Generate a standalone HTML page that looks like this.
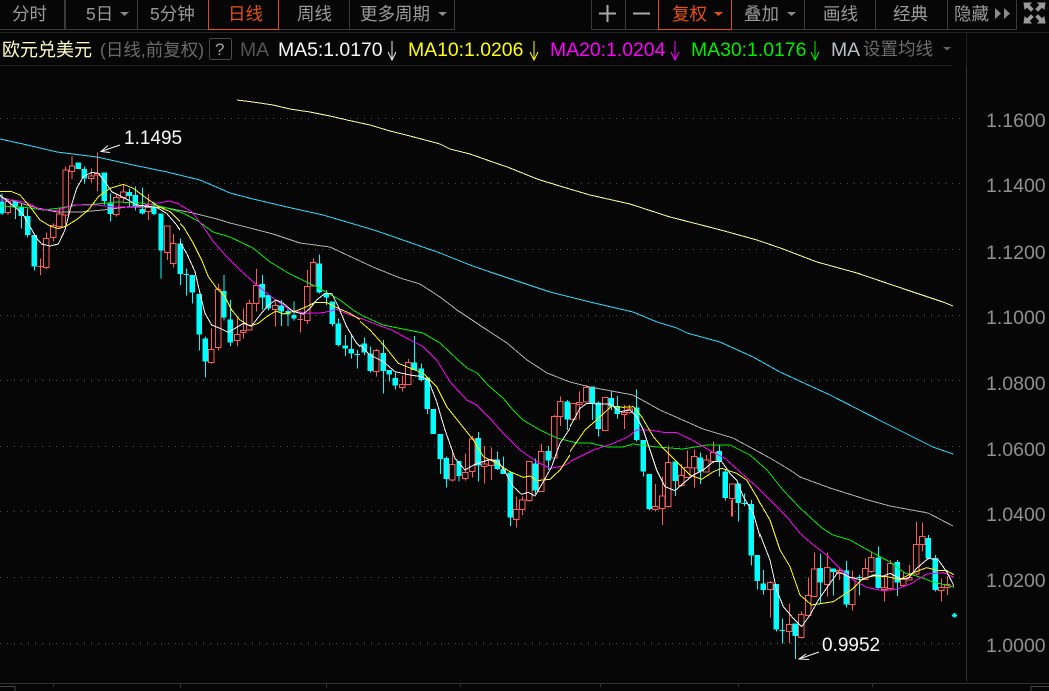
<!DOCTYPE html>
<html><head><meta charset="utf-8"><style>
html,body{margin:0;padding:0;background:#060606;width:1049px;height:691px;overflow:hidden}
svg{display:block}
text{font-family:"Liberation Sans","Noto Sans CJK SC",sans-serif}
.c{fill:none;stroke:#00ffff}
.r{fill:none;stroke:#ff5a5a}
.rb{fill:#060606;stroke:#ff5a5a;stroke-width:3}
.l polyline{fill:none;stroke-width:3;stroke-linejoin:round;shape-rendering:crispEdges}
.w{stroke:#f8f8f8}.y{stroke:#ffff00}.m{stroke:#ff00ff}.g{stroke:#00ee00}
.t{font-size:17.5px;fill:#9a9a9a}
.a{font-size:19.5px;fill:#909090}
.h{font-size:19.4px}
</style></head><body>
<svg width="1049" height="691" viewBox="0 0 1049 691" xmlns="http://www.w3.org/2000/svg">
<defs>
<clipPath id="k3"><rect x="0" y="0" width="180" height="691"/></clipPath>
<clipPath id="k4"><rect x="180" y="0" width="180" height="691"/></clipPath>
<clipPath id="k5"><rect x="360" y="0" width="210" height="691"/></clipPath>
<clipPath id="k6"><rect x="570" y="0" width="190" height="691"/></clipPath>
<clipPath id="k7"><rect x="760" y="0" width="194" height="691"/></clipPath>
</defs>
<rect width="1049" height="691" fill="#060606"/>

<!-- toolbar -->
<g stroke="#3a3a3a" fill="none" shape-rendering="crispEdges">
<path d="M0 29.5H454.5V0M64.5 0V29M65.5 0V29M137.5 0V29M349.5 0V29"/>
<path d="M591.5 0V29.5H1016.5V0M625.5 0V29M804.5 0V29M875.5 0V29M947.5 0V29"/>
<path stroke="#222" d="M0 32.5H1049M0 65.5H952M966.5 33V65"/>
</g>
<path d="M208.5 0V29.5H278.5V0M658.5 0V29.5H731.5V0" fill="none" stroke="#e0500e" shape-rendering="crispEdges"/>
<text class="t" x="12" y="20">分时</text>
<text class="t" x="86" y="20">5日</text>
<path d="M120 12h9l-4.500 4z" fill="#8a8a8a"/>
<text class="t" x="150" y="20">5分钟</text>
<text class="t" x="228" y="20" style="fill:#e8500f">日线</text>
<text class="t" x="297" y="20">周线</text>
<text class="t" x="360" y="20">更多周期</text>
<path d="M438 12h9l-4.500 4z" fill="#8a8a8a"/>
<path d="M599 13.500H616M607.500 5V22M633 13.500H650" stroke="#aaa" stroke-width="2" fill="none"/>
<text class="t" x="672" y="20" style="fill:#e8500f">复权</text>
<path d="M714 12h9l-4.500 4z" fill="#e8500f"/>
<text class="t" x="744" y="20">叠加</text>
<path d="M787 12h9l-4.500 4z" fill="#8a8a8a"/>
<text class="t" x="823" y="20">画线</text>
<text class="t" x="893" y="20">经典</text>
<text class="t" x="954" y="20">隐藏</text>
<path d="M995 8l6 5.500-6 5.500zM1004 8l6 5.500-6 5.500z" fill="#8a8a8a"/>
<g fill="#9a9a9a" stroke="#9a9a9a" stroke-width="1">
<path d="M1024 3h7l-2 2 4 4-2 2-4-4-2 2zM1045 3h-7l2 2-4 4 2 2 4-4 2 2zM1024 23h7l-2-2 4-4-2-2-4 4-2-2zM1045 23h-7l2-2-4-4 2-2 4 4 2-2z"/>
</g>

<!-- header row -->
<text x="2" y="56" font-size="18" fill="#ffffc8">欧元兑美元</text>
<text x="100" y="56" font-size="17.500" fill="#6a6a6a">(日线,前复权)</text>
<rect x="209.500" y="38.500" width="22" height="21" rx="2" fill="none" stroke="#4a4a4a"/>
<text x="215" y="55" font-size="17" fill="#a0a0a0">?</text>
<text class="h" x="240" y="56" fill="#555">MA</text>
<text class="h" x="278" y="56" fill="#f8f8f8">MA5:1.0170</text>
<path d="M392 41V60M388 52L392 60L396 52" stroke="#eee" fill="none"/>
<text class="h" x="408" y="56" fill="#ffff00">MA10:1.0206</text>
<path d="M534 41V60M530 52L534 60L538 52" stroke="#ffff00" fill="none"/>
<text class="h" x="550" y="56" fill="#ff00ff">MA20:1.0204</text>
<path d="M675 41V60M671 52L675 60L679 52" stroke="#ff00ff" fill="none"/>
<text class="h" x="691" y="56" fill="#00ee00">MA30:1.0176</text>
<path d="M815 41V60M811 52L815 60L819 52" stroke="#00ee00" fill="none"/>
<text class="h" x="831" y="56" fill="#b8c0c8">MA</text>
<text x="863" y="55" font-size="17.500" fill="#6c6c6c">设置均线</text>
<path d="M943 47h8l-4 3.500z" fill="#666"/>

<!-- grid -->
<g stroke="#4a4a4a" stroke-dasharray="1 6" shape-rendering="crispEdges">
<path d="M0 118.500H970M0 183.500H970M0 249.500H970M0 315.500H970M0 380.500H970M0 446.500H970M0 511.500H970M0 577.500H970M0 643.500H970"/>
</g>
<path d="M966.500 66V681M0 683.500H1049M53.500 684V687M180.500 683V688M326.500 683V688M460.500 684V687M600.500 684V687M738.500 684V687M872.500 684V687" stroke="#333" fill="none" shape-rendering="crispEdges"/>
<path d="M0 686.500H15V691M1031 691V686.500H1049" stroke="#444" fill="none" shape-rendering="crispEdges"/>

<!-- axis labels -->
<text class="a" x="986" y="127">1.1600</text>
<text class="a" x="986" y="192">1.1400</text>
<text class="a" x="986" y="259">1.1200</text>
<text class="a" x="986" y="324">1.1000</text>
<text class="a" x="986" y="390">1.0800</text>
<text class="a" x="986" y="456">1.0600</text>
<text class="a" x="986" y="521">1.0400</text>
<text class="a" x="986" y="587">1.0200</text>
<text class="a" x="986" y="652">1.0000</text>

<!-- candles -->
<g shape-rendering="crispEdges">
<g transform="translate(0 120) scale(.33333)">
<path class="c" stroke-width="3" d="M6 220V285M46 240V297M64 250V325M83 265V352M103 345V452M235 128V147M253 140V190M313 158V255M331 220V305M388 205V260M406 200V272M427 202V283"/>
<path class="c" stroke-width="16" d="M6 245V280M46 245V262M64 262V288M83 288V345M103 345V440M235 128V147M253 147V175M313 158V243M331 250V282M388 216V228M406 225V258M427 267V280"/>
<path class="r" stroke-width="3" d="M24 235V285M121 415V465M139 338V447M160 310V365M178 262V325M197 140V315M216 108V177M274 145V188M292 97V213M349 222V290M370 195V245M445 222V300M113 439H129"/>
<path class="rb" d="M16 245H32V278H16ZM131 355H147V443H131ZM152 316H168V352H152ZM170 282H186V320H170ZM189 150H205V285H189ZM208 138H224V155H208ZM266 168H282V176H266ZM284 160H300V165H284ZM341 232H357V284H341ZM362 216H378V232H362ZM437 262H453V275H437Z"/>
</g>
<g transform="translate(150 200) scale(.33333)">
<path class="c" stroke-width="3" d="M12 5V47M33 40V236M91 115V255M109 205V287M127 225V310M148 282V452M166 410V533M222 225V362M241 300V438M337 225V328M355 282V332M394 300V378M414 325V378M432 305V362M508 163V280M529 270V315M547 305V380M565 355V440M586 405V468M604 405V475M622 450V505M643 412V465M661 440V518M700 420V580M718 510V545M736 518V568M793 408V510M814 490V545M101 223H117M614 463H630"/>
<path class="c" stroke-width="16" d="M12 20V42M33 40V152M91 130V222M127 225V278M148 282V404M166 415V485M222 273V353M241 358V428M337 252V293M355 285V325M394 316V335M414 333V344M432 345V356M508 190V278M529 280V293M547 305V372M565 370V435M586 436V446M604 447V461M643 430V458M661 460V513M700 459V513M718 510V524M736 534V557M793 487V510M814 505V540"/>
<path class="r" stroke-width="3" d="M52 78V180M70 102V203M184 385V490M205 250V452M262 350V440M280 325V415M298 298V392M319 207V335M376 305V380M451 335V398M472 210V372M490 175V258M679 447V530M757 527V575M775 477V555M443 358H459"/>
<path class="rb" d="M44 78H60V158H44ZM62 130H78V190H62ZM176 448H192V488H176ZM197 268H213V443H197ZM254 403H270V422H254ZM272 392H288V397H272ZM290 310H306V390H290ZM311 256H327V310H311ZM368 317H384V329H368ZM464 259H480V362H464ZM482 187H498V258H482ZM671 451H687V515H671ZM749 553H765V562H749ZM767 487H783V553H767Z"/>
</g>
<g transform="translate(330 330) scale(.33333)">
<path class="c" stroke-width="3" d="M292 143V252M310 237V312M331 312V432M349 380V473M387 393V455M445 306V455M502 365V420M520 380V432M541 425V588M616 385V492M655 348V420M712 210V300M787 170V270M805 215V320M844 185V240M862 198V265"/>
<path class="c" stroke-width="16" d="M292 143V237M310 237V312M331 312V387M349 384V447M387 393V438M445 324V407M502 388V417M520 417V432M541 428V563M616 400V482M655 363V392M712 214V269M787 170V220M805 217V297M844 204V230M862 228V252"/>
<path class="r" stroke-width="3" d="M367 360V455M406 370V452M427 318V442M463 348V460M484 353V450M559 500V593M577 500V555M598 394V515M634 342V485M673 255V385M691 200V288M730 220V270M748 185V268M769 165V218M826 202V302M883 225V297M899 225V250"/>
<path class="rb" d="M359 403H375V450H359ZM398 427H414V446H398ZM419 327H435V425H419ZM455 402H471V410H455ZM476 390H492V407H476ZM551 538H567V568H551ZM569 510H585V538H569ZM590 394H606V512H590ZM626 364H642V485H626ZM665 259H681V384H665ZM683 214H699V260H683ZM722 220H738V268H722ZM740 217H756V224H740ZM761 172H777V216H761ZM818 202H834V302H818ZM875 247H891V254H875ZM891 237H907V247H891Z"/>
</g>
<g transform="translate(540 380) scale(.33333)">
<path class="c" stroke-width="3" d="M290 28V185M310 180V290M328 282V392M406 245V348M481 218V312M538 197V290M556 270V362M595 311V425M613 340V378M605 370H621"/>
<path class="c" stroke-width="16" d="M290 82V180M310 180V275M328 282V387M406 245V303M481 232V275M538 213V243M556 275V354M595 311V369"/>
<path class="r" stroke-width="3" d="M346 312V395M367 290V435M385 197V382M424 252V320M442 212V294M463 208V323M499 225V278M520 184V250M577 312V410"/>
<path class="rb" d="M338 379H354V388H338ZM359 348H375V386H359ZM377 247H393V380H377ZM416 286H432V316H416ZM434 262H450V292H434ZM455 229H471V264H455ZM491 240H507V276H491ZM512 218H528V245H512ZM569 312H585V356H569Z"/>
</g>
<g transform="translate(730 500) scale(.33333)">
<path class="c" stroke-width="3" d="M64 0V197M82 165V268M100 210V283M139 252V395M157 355V430M196 370V477M271 160V310M310 205V287M349 183V322M388 225V287M445 140V266M502 180V288M595 105V178M616 165V275M149 392H165M380 233H396M35 10H51M43 0V18"/>
<path class="c" stroke-width="16" d="M64 12V167M82 165V243M100 250V270M139 252V388M196 370V408M271 204V248M310 205V216M349 212V313M445 172V264M502 186V248M595 114V175M616 174V270"/>
<path class="c" stroke-width="6" d="M666 346H681M673 339V353"/>
<path class="r" stroke-width="3" d="M5 0V50M121 243V353M178 310V430M214 335V415M235 232V348M253 158V290M292 157V290M328 205V240M367 212V332M406 176V240M424 155V218M463 230V305M481 180V268M520 215V258M538 195V240M559 66V225M577 68V155M634 235V305M652 228V285"/>
<path class="rb" d="M113 247H129V268H113ZM170 373H186V395H170ZM206 343H222V413H206ZM227 286H243V346H227ZM245 207H261V290H245ZM284 202H300V254H284ZM320 212H336V220H320ZM359 233H375V314H359ZM398 205H414V238H398ZM416 172H432V215H416ZM455 262H471V268H455ZM473 191H489V266H473ZM512 238H528V256H512ZM530 232H546V240H530ZM551 133H567V222H551ZM569 109H585V133H569ZM626 262H642V272H626ZM644 253H660V262H644Z"/>
</g>
</g>

<!-- long MAs and gray / green in page coordinates -->
<g class="l">
<polyline stroke="#ffff99" stroke-width="1" style="stroke-width:1" points="237,100 253,102 273,105 290,109 310,112 330,116 347,120 370,125 390,131 410,136 440,144 450,149 470,154 487,160 510,168 537,179 563,187 590,195 630,204 670,217 717,229 757,240 783,249 817,262 857,273 907,290 943,302 953,306"/>
<polyline stroke="#22ddff" style="stroke-width:1" points="0,139 23,144 57,152 97,157 133,165 167,172 200,180 230,193 253,199 287,207 323,215 357,225 377,231 420,246 440,253 470,265 490,272 523,283 550,292 590,302 633,312 657,322 677,328 687,333 720,342 753,357 780,372 830,395 883,422 933,447 953,454"/>
<polyline stroke="#b0b0b0" style="stroke-width:1" points="0,197 20,203 37,208 57,212 80,212 103,210 127,207 153,207 167,208 193,213 217,219 230,223 250,228 273,234 300,243 330,247 347,255 373,267 400,278 420,284 440,297 457,310 487,330 507,343 527,360 547,373 570,382 590,387 633,395 660,410 703,429 733,438 770,458 790,470 800,477 830,488 868,500 890,506 928,513 953,526"/>
<polyline class="g" style="stroke-width:1" points="0,206 23,207 43,210 60,208 77,205 97,204 117,202 140,203 160,206 183,213 198,221 213,232 230,237 253,248 270,262 290,274 317,287 340,300 353,310 363,316 383,325 403,329 423,333 440,343 458,360 467,368 477,373 490,387 503,398 513,410 523,420 540,430 557,438 577,443 590,443 607,447 623,447 633,444 657,447 683,449 707,445 730,445 750,455 767,470 783,490 800,508 822,528 833,535 850,540 873,553 890,562 905,573 920,577 933,582 954,587"/>
</g>

<!-- moving averages -->
<g class="l">
<g clip-path="url(#k3)"><g transform="translate(0 120) scale(.33333)">
<polyline class="m" points="0,240 40,240 80,248 120,268 170,272 220,255 290,255 350,262 420,258 470,250 510,243 555,258 590,295 630,360 680,420 730,465 780,490"/>
<polyline class="y" points="0,215 35,215 60,225 90,260 120,300 150,318 175,326 200,318 235,295 265,270 295,230 330,205 370,193 400,205 440,235 475,260 510,275 545,310 575,360 605,420 630,480 660,520"/>
<polyline class="w" points="0,225 30,250 50,265 70,285 90,320 110,355 125,372 150,378 175,372 195,330 210,270 230,205 250,170 275,157 295,160 315,185 335,215 365,230 385,240 410,255 440,258 470,262 500,280 530,315 560,360 580,420 600,490 605,520"/>
</g></g>
<g clip-path="url(#k4)"><g transform="translate(150 200) scale(.33333)">
<polyline class="m" points="0,15 40,5 85,12 125,35 160,80 190,125 230,170 270,210 320,255 370,295 420,330 470,340 520,338 560,328 600,345 660,365 720,385 770,408 810,425 840,450 870,505 900,545"/>
<polyline class="y" points="0,5 30,25 70,50 100,80 130,130 155,180 175,230 200,265 225,290 245,330 270,360 300,378 325,370 350,350 378,333 400,342 440,332 470,320 495,307 530,308 565,325 600,340 640,365 670,410 700,445 735,485 770,497 810,505 845,540 870,580 880,600"/>
<polyline class="w" points="0,15 20,45 50,70 80,110 110,160 135,215 150,280 165,340 185,375 210,385 235,397 255,385 280,370 305,378 330,345 355,315 378,300 400,310 430,335 460,342 480,325 500,300 525,280 545,280 565,320 590,380 620,430 650,458 680,470 710,490 740,515 770,525 810,527 840,555 860,600"/>
</g></g>
<g clip-path="url(#k5)"><g transform="translate(330 330) scale(.33333)">
<polyline class="m" points="80,-40 120,-24 185,0 240,30 280,50 320,90 360,155 410,210 440,225 480,265 520,310 570,360 620,395 660,415 700,408 760,375 800,358 850,345 900,315"/>
<polyline class="y" points="85,-30 120,0 165,50 205,100 250,118 280,130 320,170 350,230 390,280 430,330 460,380 500,400 540,425 580,442 600,438 620,452 660,448 690,420 730,360 770,295 810,255 845,230 900,230"/>
<polyline class="w" points="60,0 85,40 120,75 160,95 195,125 240,135 275,140 295,150 320,215 345,300 375,385 405,420 435,403 480,388 505,395 525,425 550,470 575,493 595,487 615,498 640,455 665,410 690,340 720,295 750,225 800,222 840,220 860,232 880,245 900,240"/>
</g></g>
<g clip-path="url(#k6)"><g transform="translate(540 380) scale(.33333)">
<polyline class="m" points="0,262 40,265 100,240 160,210 220,190 265,170 290,150 330,150 370,157 410,158 460,182 510,212 555,235 610,285 650,320 680,350 730,400 780,460"/>
<polyline class="y" points="0,300 30,295 60,260 100,200 135,150 175,115 215,78 250,82 280,80 305,110 340,170 370,205 410,245 450,285 485,298 520,275 545,265 590,280 620,300 650,350 680,410 710,480 735,540"/>
<polyline class="w" points="0,330 30,270 60,190 90,140 120,85 140,70 180,72 210,72 240,95 270,90 290,110 310,150 330,210 350,270 375,320 405,332 430,310 460,285 490,270 520,245 545,245 570,280 590,300 610,350 640,400 660,470 685,540"/>
</g></g>
<g clip-path="url(#k7)"><g transform="translate(730 500) scale(.33333)">
<polyline class="m" points="85,-35 120,0 170,50 210,100 250,135 290,165 330,205 370,240 410,262 460,272 500,268 545,250 590,222 640,218 673,232"/>
<polyline class="y" points="85,0 120,60 150,150 180,200 210,285 245,315 310,305 340,285 370,265 400,235 430,228 470,230 510,238 545,220 590,203 625,212 650,212 673,225"/>
<polyline class="w" points="60,0 85,90 120,180 140,270 160,320 190,355 215,380 240,345 265,300 300,250 325,215 360,232 395,240 430,225 460,228 480,220 510,235 535,235 560,205 595,175 625,180 650,215 673,260"/>
</g></g>
</g>

<!-- extreme labels -->
<text x="124" y="144" font-size="19" fill="#f8f8f8">1.1495</text>
<path d="M120 145L101 151.500M108 145.500L101 151.500L110 152.500" stroke="#f4f4f4" fill="none"/>
<text x="822" y="651" font-size="19" fill="#f8f8f8">0.9952</text>
<path d="M819 652L799 659M806 654L799 659L809 659.500" stroke="#f4f4f4" fill="none"/>
</svg>
</body></html>
